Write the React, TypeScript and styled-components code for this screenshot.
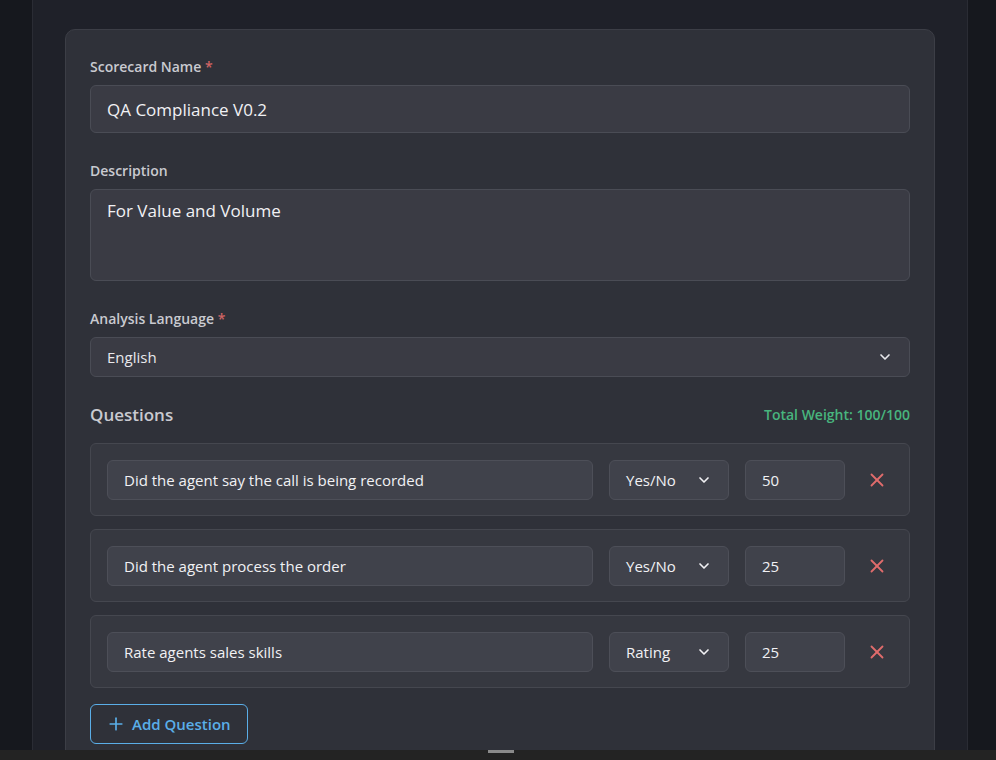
import React from 'react';
import styled, { createGlobalStyle } from 'styled-components';
import { ChevronDown, X, Plus } from 'lucide-react';

const Global = createGlobalStyle`
    html, body { margin: 0; background: #16181e; }
    body { font-family: "Open Sans", "Noto Sans", sans-serif; overflow: hidden; }
`;

const Page = styled.div`
    height: 750px;
    display: flex;
    padding-left: 32px;
    overflow: hidden;
`;

const Panel = styled.div`
    width: 936px;
    background: #1f2129;
    border-left: 1px solid #2a2c34;
    border-right: 1px solid #2a2c34;
    padding: 29px 32px 0;
    box-sizing: border-box;
`;

const Card = styled.div`
    background: #2f3139;
    border: 1px solid #3c3e46;
    border-radius: 10px;
    padding: 27px 24px 40px;
    display: flex;
    flex-direction: column;
`;

const Label = styled.div`
    font-size: 14px;
    font-weight: 600;
    color: #c9cad0;
    margin-bottom: 9px;
    span { color: #d06464; }
`;

const Field = styled.div`
    margin-bottom: 28px;
`;

const Input = styled.div<{ $h: number; $size?: number }>`
    height: ${p => p.$h}px;
    box-sizing: border-box;
    background: #3a3b44;
    border: 1px solid #4a4c55;
    border-radius: 6px;
    padding: 0 16px;
    display: flex;
    align-items: center;
    color: #f1f1f4;
    font-size: ${p => p.$size ?? 17}px;
`;

const Textarea = styled(Input)`
    align-items: flex-start;
    padding-top: 9px;
`;

const Select = styled(Input)`
    justify-content: space-between;
    color: #e8e8ec;
`;

const Header = styled.div`
    display: flex;
    justify-content: space-between;
    align-items: center;
    margin: -2px 0 17px;
`;

const Title = styled.div`
    font-size: 17px;
    font-weight: 600;
    color: #c9cad0;
`;

const Total = styled.div`
    font-size: 14px;
    font-weight: 600;
    color: #48b57e;
`;

const Row = styled.div`
    height: 73px;
    box-sizing: border-box;
    background: #363840;
    border: 1px solid #45474f;
    border-radius: 6px;
    padding: 0 16px;
    display: flex;
    align-items: center;
    gap: 16px;
    margin-bottom: 13px;
`;

const Box = styled.div<{ $w?: number }>`
    height: 40px;
    box-sizing: border-box;
    ${p => (p.$w ? `width: ${p.$w}px;` : 'flex: 1;')}
    background: #40424b;
    border: 1px solid #4d4f58;
    border-radius: 6px;
    padding: 0 16px;
    display: flex;
    align-items: center;
    justify-content: space-between;
    color: #f1f1f4;
    font-size: 15px;
`;

const Remove = styled.div`
    width: 32px;
    display: flex;
    justify-content: center;
    color: #e06c6c;
`;

const AddButton = styled.button`
    align-self: flex-start;
    margin-top: 3px;
    height: 40px;
    padding: 0 16px 0 15px;
    background: transparent;
    border: 1px solid #5aaee8;
    border-radius: 6px;
    color: #5aaee8;
    font-family: inherit;
    font-size: 15px;
    font-weight: 600;
    display: flex;
    align-items: center;
    gap: 6px;
`;

const Bottom = styled.div`
    height: 10px;
    background: #232323;
    display: flex;
    justify-content: center;
    padding-left: 5px;
`;

const Thumb = styled.div`
    width: 26px;
    height: 3px;
    background: #8a8a8a;
`;

const questions = [
    { text: 'Did the agent say the call is being recorded', type: 'Yes/No', weight: 50 },
    { text: 'Did the agent process the order', type: 'Yes/No', weight: 25 },
    { text: 'Rate agents sales skills', type: 'Rating', weight: 25 },
];

export default function App() {
    return (
        <>
            <Global />
            <Page>
                <Panel>
                    <Card>
                        <Field>
                            <Label>Scorecard Name <span>*</span></Label>
                            <Input $h={48}>QA Compliance V0.2</Input>
                        </Field>
                        <Field>
                            <Label>Description</Label>
                            <Textarea $h={92}>For Value and Volume</Textarea>
                        </Field>
                        <Field>
                            <Label>Analysis Language <span>*</span></Label>
                            <Select $h={40} $size={15}>
                                English
                                <ChevronDown size={16} strokeWidth={2.5} />
                            </Select>
                        </Field>
                        <Header>
                            <Title>Questions</Title>
                            <Total>Total Weight: 100/100</Total>
                        </Header>
                        {questions.map(q => (
                            <Row key={q.text}>
                                <Box>{q.text}</Box>
                                <Box $w={120}>
                                    {q.type}
                                    <ChevronDown size={16} strokeWidth={2.5} />
                                </Box>
                                <Box $w={100}>{q.weight}</Box>
                                <Remove><X size={22} strokeWidth={2} /></Remove>
                            </Row>
                        ))}
                        <AddButton>
                            <Plus size={20} strokeWidth={2} />
                            Add Question
                        </AddButton>
                    </Card>
                </Panel>
            </Page>
            <Bottom><Thumb /></Bottom>
        </>
    );
}
